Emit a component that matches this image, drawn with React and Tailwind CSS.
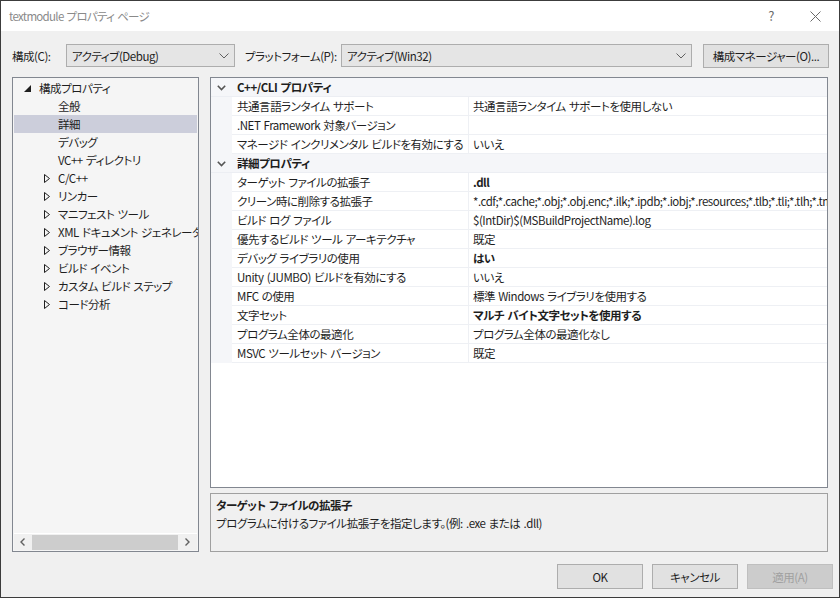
import React from "react";

const Chevron = () => (
  <svg width="10" height="6" viewBox="0 0 10 6" className="text-[#606060] shrink-0">
    <polyline points="0.5,0.5 5,5 9.5,0.5" fill="none" stroke="currentColor" strokeWidth="1" />
  </svg>
);

const GridChevron = () => (
  <svg width="9" height="6" viewBox="0 0 9 6">
    <polyline points="0.8,0.8 4.5,4.5 8.2,0.8" fill="none" stroke="#555" strokeWidth="1.6" />
  </svg>
);

const TriDown = () => (
  <svg width="7" height="7" viewBox="0 0 7 7" className="shrink-0">
    <polygon points="7,0 7,7 0,7" fill="#1e1e1e" />
  </svg>
);

const TriRight = () => (
  <svg width="6" height="9" viewBox="0 0 6 9" className="shrink-0">
    <polygon points="0.5,0.5 5.5,4.5 0.5,8.5" fill="none" stroke="#1e1e1e" strokeWidth="1" />
  </svg>
);

const treeItems = [
  { t: "全般", kind: "leaf" },
  { t: "詳細", kind: "leaf", sel: true },
  { t: "デバッグ", kind: "leaf" },
  { t: "VC++ ディレクトリ", kind: "leaf" },
  { t: "C/C++", kind: "node" },
  { t: "リンカー", kind: "node" },
  { t: "マニフェスト ツール", kind: "node" },
  { t: "XML ドキュメント ジェネレーター", kind: "node" },
  { t: "ブラウザー情報", kind: "node" },
  { t: "ビルド イベント", kind: "node" },
  { t: "カスタム ビルド ステップ", kind: "node" },
  { t: "コード分析", kind: "node" },
];

const sections = [
  {
    title: "C++/CLI プロパティ",
    rows: [
      ["共通言語ランタイム サポート", "共通言語ランタイム サポートを使用しない"],
      [".NET Framework 対象バージョン", ""],
      ["マネージド インクリメンタル ビルドを有効にする", "いいえ"],
    ],
  },
  {
    title: "詳細プロパティ",
    rows: [
      ["ターゲット ファイルの拡張子", ".dll", true],
      [
        "クリーン時に削除する拡張子",
        "*.cdf;*.cache;*.obj;*.obj.enc;*.ilk;*.ipdb;*.iobj;*.resources;*.tlb;*.tli;*.tlh;*.tmp;*.rsp;*.pgc;*.pgd;*.meta;*.tlog;*.manifest;*.res;*.pch;*.exp;*.idb;*.rep;*.xdc;*.pdb",
      ],
      ["ビルド ログ ファイル", "$(IntDir)$(MSBuildProjectName).log"],
      ["優先するビルド ツール アーキテクチャ", "既定"],
      ["デバッグ ライブラリの使用", "はい", true],
      ["Unity (JUMBO) ビルドを有効にする", "いいえ"],
      ["MFC の使用", "標準 Windows ライブラリを使用する"],
      ["文字セット", "マルチ バイト文字セットを使用する", true],
      ["プログラム全体の最適化", "プログラム全体の最適化なし"],
      ["MSVC ツールセット バージョン", "既定"],
    ],
  },
];

export default function App() {
  return (
    <div className="w-[840px] h-[598px] bg-[#f0f0f0] border border-[#3c3c3c] flex flex-col font-['Noto_Sans_CJK_JP',sans-serif] [font-feature-settings:'palt'] text-[11.5px] tracking-[-0.45px] [word-spacing:1px] leading-[16px] text-[#1e1e1e] overflow-hidden">
      {/* Title bar */}
      <div className="h-[30px] bg-white flex items-center pl-[8px] pr-[14px] shrink-0">
        <span className="text-[#8a8a8a] text-[11.5px] tracking-[-0.7px]">textmodule プロパティ ページ</span>
        <div className="flex-1" />
        <span className="text-[#6a6a6a] text-[13px] mr-[36px]">?</span>
        <svg width="11" height="11" viewBox="0 0 11 11" className="mr-[4px]">
          <path d="M0.5 0.5 L10.5 10.5 M10.5 0.5 L0.5 10.5" stroke="#6a6a6a" strokeWidth="1" />
        </svg>
      </div>

      {/* Toolbar */}
      <div className="mt-[13px] h-[23px] flex items-center pl-[11px] shrink-0 whitespace-nowrap">
        <div className="w-[54px] shrink-0">構成(C):</div>
        <div className="w-[169px] h-[23px] shrink-0 bg-[#e5e5e5] border border-[#adadad] flex items-center pl-[5px] pr-[5px]">
          <span className="flex-1">アクティブ(Debug)</span>
          <Chevron />
        </div>
        <div className="ml-[10px] w-[96px] shrink-0">プラットフォーム(P):</div>
        <div className="w-[351px] h-[23px] shrink-0 bg-[#e5e5e5] border border-[#adadad] flex items-center pl-[5px] pr-[5px]">
          <span className="flex-1">アクティブ(Win32)</span>
          <Chevron />
        </div>
        <div className="ml-[11px] w-[126px] h-[24px] shrink-0 bg-[#e1e1e1] border border-[#adadad] flex items-center justify-center">
          構成マネージャー(O)...
        </div>
      </div>

      {/* Main */}
      <div className="mt-[10px] flex pl-[11px] gap-[11px] shrink-0">
        {/* Tree */}
        <div className="w-[187px] h-[475px] shrink-0 border border-[#828790] bg-[#f5f5f5] flex flex-col">
          <div className="flex-1 pt-[1px] px-[1px] overflow-hidden">
            <div className="h-[18px] flex items-center whitespace-nowrap pl-[10px]">
              <TriDown />
              <span className="ml-[8px]">構成プロパティ</span>
            </div>
            {treeItems.map((it) => (
              <div
                key={it.t}
                className={
                  "h-[18px] flex items-center whitespace-nowrap " + (it.sel ? "bg-[#cccedb]" : "")
                }
              >
                <div className="w-[44px] shrink-0 flex items-center pl-[30px]">
                  {it.kind === "node" ? <TriRight /> : null}
                </div>
                <span>{it.t}</span>
              </div>
            ))}
          </div>
          <div className="h-[17px] mx-[1px] mb-[1px] border-t border-white bg-[#f0f0f0] flex items-center">
            <div className="w-[17px] flex justify-center">
              <svg width="5" height="8" viewBox="0 0 5 8">
                <polyline points="4.5,0.5 1,4 4.5,7.5" fill="none" stroke="#606060" strokeWidth="1.4" />
              </svg>
            </div>
            <div className="ml-[1px] w-[146px] h-[15px] bg-[#cdcdcd]" />
            <div className="flex-1 flex justify-center">
              <svg width="5" height="8" viewBox="0 0 5 8">
                <polyline points="0.5,0.5 4,4 0.5,7.5" fill="none" stroke="#606060" strokeWidth="1.4" />
              </svg>
            </div>
          </div>
        </div>

        {/* Right column */}
        <div className="w-[618px] shrink-0 flex flex-col gap-[5px]">
          <div className="h-[411px] border border-[#828790] bg-white overflow-hidden">
            {sections.map((s) => (
              <div key={s.title}>
                <div className="h-[19px] flex items-center bg-[#f5f6f9] border-b border-[#eceef3]">
                  <div className="w-[21px] flex justify-center pt-[1px]">
                    <GridChevron />
                  </div>
                  <span className="pl-[5px] font-bold">{s.title}</span>
                </div>
                {s.rows.map(([k, v, b]) => (
                  <div key={k} className="h-[19px] flex">
                    <div className="w-[21px] bg-[#f5f6f9] shrink-0" />
                    <div className="w-[236px] shrink-0 pl-[5px] flex items-center border-b border-[#eef0f4] whitespace-nowrap overflow-hidden">
                      {k}
                    </div>
                    <div className="w-[1px] bg-[#eef0f4] shrink-0" />
                    <div
                      className={
                        "flex-1 min-w-0 pl-[4px] flex items-center border-b border-[#eef0f4] whitespace-nowrap overflow-hidden " +
                        (b ? "font-bold" : "")
                      }
                    >
                      {v}
                    </div>
                  </div>
                ))}
              </div>
            ))}
          </div>
          <div className="h-[59px] border border-[#a0a0a0] bg-[#f0f0f0] pl-[5px] pt-[2px]">
            <div className="font-bold h-[18px] flex items-center">ターゲット ファイルの拡張子</div>
            <div className="h-[18px] flex items-center">
              プログラムに付けるファイル拡張子を指定します。(例: .exe または .dll)
            </div>
          </div>
        </div>
      </div>

      {/* Buttons */}
      <div className="mt-[12px] flex justify-end pr-[6px] gap-[9px] shrink-0">
        <div className="w-[86px] h-[25px] bg-[#e1e1e1] border border-[#adadad] flex items-center justify-center">
          OK
        </div>
        <div className="w-[86px] h-[25px] bg-[#e1e1e1] border border-[#adadad] flex items-center justify-center">
          キャンセル
        </div>
        <div className="w-[86px] h-[25px] bg-[#cccccc] border border-[#bfbfbf] text-[#a0a0a0] flex items-center justify-center">
          適用(A)
        </div>
      </div>
    </div>
  );
}
